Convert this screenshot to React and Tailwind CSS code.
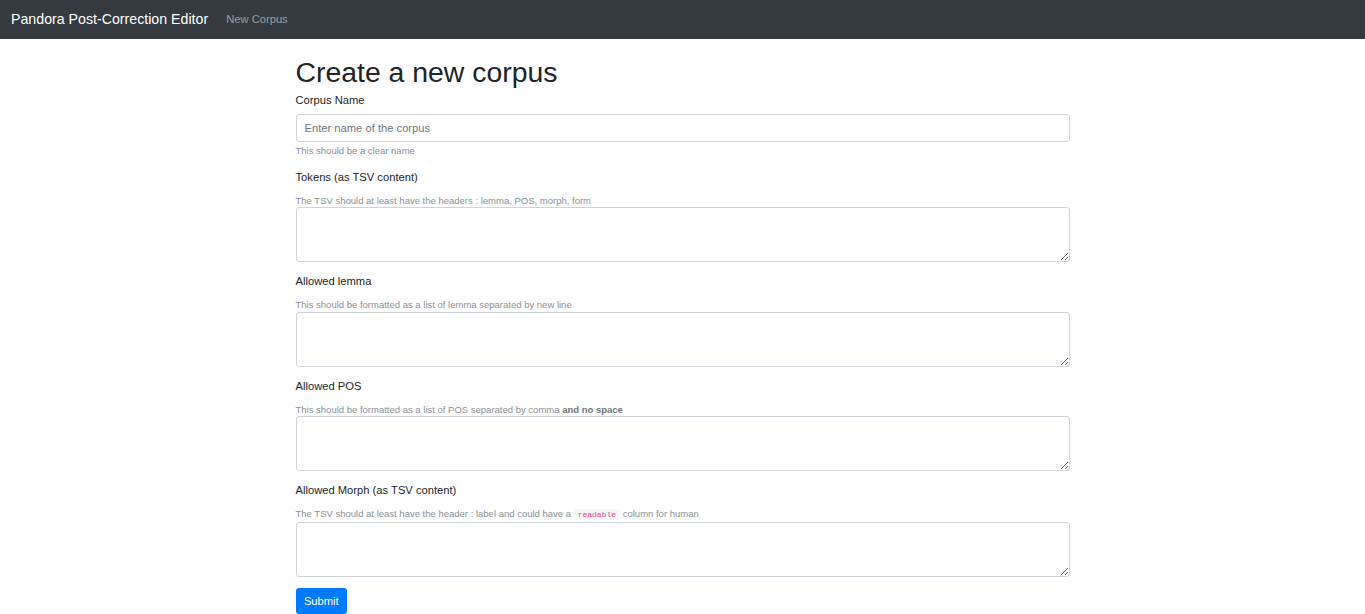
const fields = [
  { label: 'Tokens (as TSV content)', help: <>The TSV should at least have the headers : lemma, POS, morph, form</> },
  { label: 'Allowed lemma', help: <>This should be formatted as a list of lemma separated by new line</> },
  { label: 'Allowed POS', help: <>This should be formatted as a list of POS separated by comma <b className="font-bold text-[#6c757d]">and no space</b></> },
  {
    label: 'Allowed Morph (as TSV content)',
    help: (
      <>
        The TSV should at least have the header : label and could have a{' '}
        <code className="rounded-[2px] bg-[#f7f7f9] px-[4px] py-[1px] font-['Liberation_Mono',monospace] text-[8px] text-[#e83e8c]">readable</code>{' '}
        column for human
      </>
    ),
  },
]

function App() {
  return (
    <div className="min-h-screen bg-white font-['Liberation_Sans',Arial,sans-serif] text-[#212529]">
      <nav className="flex h-[39px] items-center bg-[#343a40] px-[11px]">
        <a className="mr-[12px] text-[14.2px] leading-[21px] text-white" href="#">Pandora Post-Correction Editor</a>
        <a className="px-[6px] text-[11.2px] text-white/50" href="#">New Corpus</a>
      </nav>
      <main className="mx-auto w-[774px]">
        <h1 className="mt-[16px] mb-[3px] text-[28.4px] leading-[34px] font-normal">Create a new corpus</h1>
        <form onSubmit={(e) => e.preventDefault()}>
          <div className="mb-[11px]">
            <label className="mb-[5px] block text-[11.2px] leading-[17px]">Corpus Name</label>
            <input
              className="block h-[28px] w-full rounded-[3px] border border-[#ced4da] px-[8px] text-[11.2px] placeholder:text-[#6c757d]"
              placeholder="Enter name of the corpus"
            />
            <small className="mt-[2px] block text-[9.5px] leading-[13.5px] text-[#8a9096]">This should be a clear name</small>
          </div>
          {fields.map((f) => (
            <div key={f.label} className="mb-[11px]">
              <label className="block text-[11.2px] leading-[17px]">{f.label}</label>
              <small className="mt-[9px] block text-[9.5px] leading-[12.5px] text-[#8a9096]">{f.help}</small>
              <textarea className="block h-[55px] w-full rounded-[3px] border border-[#ced4da] px-[8px] py-[4px] text-[11.2px]" />
            </div>
          ))}
          <button className="rounded-[3px] bg-[#007bff] px-[8.4px] py-[4.5px] text-[11.2px] leading-[17px] text-white" type="submit">Submit</button>
        </form>
      </main>
    </div>
  )
}

export default App
